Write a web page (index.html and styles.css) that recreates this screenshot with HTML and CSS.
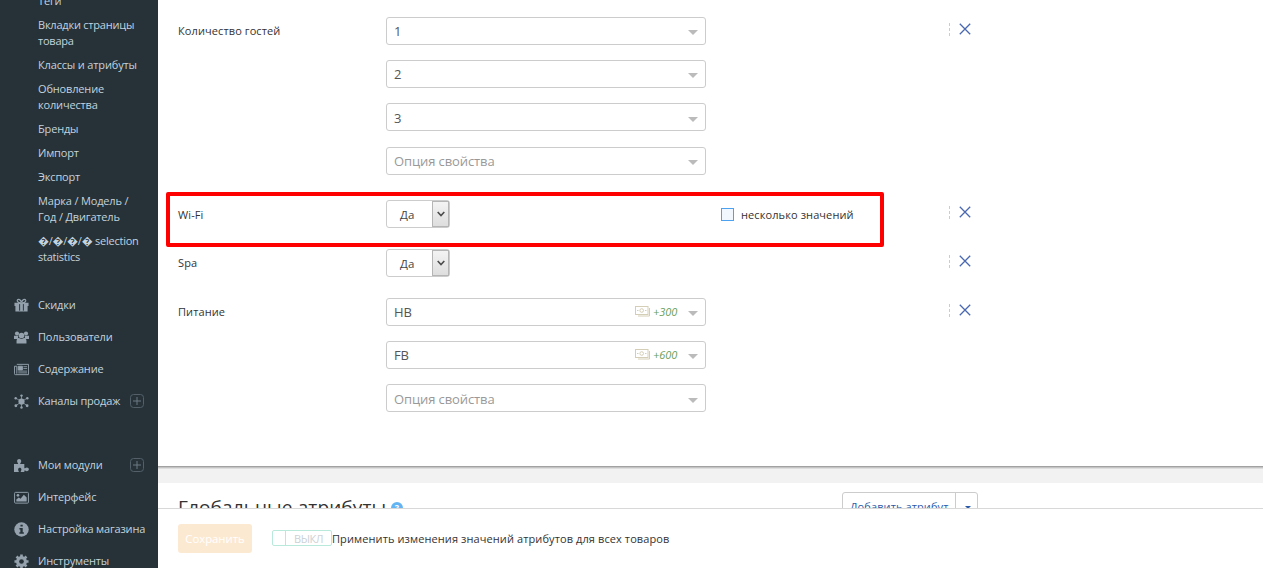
FILE: index.html
```html
<!DOCTYPE html>
<html lang="ru">
<head>
<meta charset="utf-8">
<title>Атрибуты товара</title>
<link rel="stylesheet" href="styles.css">
</head>
<body>
<svg class="defs" width="0" height="0">
  <symbol id="close" viewBox="0 0 12 12"><path d="M.8.8 11.2 11.2M11.2.8.8 11.2" fill="none" stroke="#4a68b0" stroke-width="1.3"/></symbol>
  <symbol id="plus" viewBox="0 0 14 14"><rect x=".5" y=".5" width="13" height="13" rx="3" fill="none" stroke="#53606a"/><path d="M7 3v8M3 7h8" stroke="#6d7983" fill="none"/></symbol>
  <symbol id="money" viewBox="0 0 16 14"><g fill="none" stroke="#d5ceb6"><rect x=".5" y="1.5" width="12.5" height="8"/><path d="M14.5 3v8H3"/><circle cx="6.7" cy="5.5" r="1.800"/><path d="M2 5.5h1.5M10 5.5h1.5"/></g></symbol>
</svg>
<div class="app">
  <nav class="sidebar">
    <div class="submenu">
      <a>Теги</a>
      <a>Вкладки страницы<br>товара</a>
      <a>Классы и атрибуты</a>
      <a>Обновление<br>количества</a>
      <a>Бренды</a>
      <a>Импорт</a>
      <a>Экспорт</a>
      <a>Марка / Модель /<br>Год / Двигатель</a>
      <a>�/�/�/� selection<br>statistics</a>
    </div>
    <div class="menu">
      <a><svg viewBox="0 0 16 16"><path d="M.5 5h15v3.500H14.500V14.500H1.500V8.500H.5z"/><path d="M7.500 5C3 5.500 2.500 1.500 4.800 1.500 6.500 1.500 7.500 3 8 5c.5-2 1.500-3.500 3.200-3.500 2.300 0 1.800 4-2.700 3.500" fill="none" stroke="#95a2ad" stroke-width="1.300"/><path d="M6 6.500v7M10 6.500v7" stroke="#263238" stroke-width="1"/></svg><span>Скидки</span></a>
      <a><svg viewBox="0 0 16 16"><circle cx="3.200" cy="3.700" r="2.200"/><circle cx="12.800" cy="3.700" r="2.200"/><path d="M0 6.200h4.500l-.3 3.500H0zM16 6.200h-4.500l.3 3.500H16z"/><circle cx="8" cy="5.900" r="3"/><path d="M2.700 14.500v-3C2.700 9 4.500 8.500 5.500 8.500Q8 10.500 10.500 8.500c1 0 2.800.5 2.800 3v3z"/></svg><span>Пользователи</span></a>
      <a><svg viewBox="0 0 16 16"><path d="M3 2.500h12.500v11h-14q-1 0-1-1v-8H3v8" fill="none" stroke="#95a2ad"/><path d="M4.500 4.500h4.500v4H4.500zM10 5h4M10 7h4M4.500 9.700H14M4.500 11.600H14" stroke="#95a2ad" stroke-width=".9"/></svg><span>Содержание</span></a>
      <a><svg viewBox="0 0 16 16"><path d="M8 8V1.800M8 8v6.200M8 8l6-3.500M8 8 2 4.500M8 8l6 4.500M8 8l-6 4.500" stroke="#95a2ad" stroke-width=".8"/><circle cx="8" cy="8" r="3.300"/><circle cx="8" cy="1.700" r="1.300"/><circle cx="8" cy="14.300" r="1.300"/><circle cx="1.800" cy="4.500" r="1.300"/><circle cx="14.200" cy="4.500" r="1.300"/><circle cx="2" cy="12.500" r="1.500"/><circle cx="14" cy="12.500" r="1.500"/></svg><span>Каналы продаж</span><svg class="plus"><use href="#plus"/></svg></a>
    </div>
    <div class="menu">
      <a><svg viewBox="0 0 16 16"><path d="M0 6.500h4.200c.8-.7-.9-1.500-.9-3.300 0-3 4.400-3 4.400 0C7.700 5 6 5.800 6.800 6.500H11v4.200c.7.800 1.200-.7 2.600-.7 3 0 3 4 0 4-1.400 0-1.900-1.300-2.600-.5V15H7.300c-.5-1 .6-1.500.6-2.800 0-2.400-3.500-2.400-3.500 0 0 1.300 1.100 1.800.6 2.800H0z"/></svg><span>Мои модули</span><svg class="plus"><use href="#plus"/></svg></a>
      <a><svg viewBox="0 0 16 16"><rect x=".6" y="2.500" width="14.800" height="11.500" rx="1" fill="none" stroke="#95a2ad"/><circle cx="4.200" cy="5.700" r="1.400"/><path d="M2.500 12.300V10L5 8l2 1.200L10.500 5l3 3v4.300z"/></svg><span>Интерфейс</span></a>
      <a><svg viewBox="0 0 16 16"><circle cx="8" cy="8" r="7.700"/><path d="M6.900 2.800h2.400v2.100H6.900zM5.800 6.500h3.500V11h1.200v1.500H5.700V11h1.100V8h-1z" fill="#263238"/></svg><span>Настройка магазина</span></a>
      <a><svg viewBox="0 0 16 16"><circle cx="8" cy="8" r="4.100" fill="none" stroke="#95a2ad" stroke-width="3.400"/><path d="M8 .5v15M.5 8h15M2.700 2.700l10.600 10.600M13.300 2.700 2.700 13.300" stroke="#95a2ad" stroke-width="2.800"/><circle cx="8" cy="8" r="2.500" fill="#263238"/></svg><span>Инструменты</span></a>
    </div>
  </nav>
  <main class="content">
    <section class="card">
      <div class="row row-guests">
        <label>Количество гостей</label>
        <div class="fields">
          <div class="combo"><span>1</span><i></i></div>
          <div class="combo"><span>2</span><i></i></div>
          <div class="combo low"><span>3</span><i></i></div>
          <div class="combo empty"><span>Опция свойства</span><i></i></div>
        </div>
        <div class="remove"><svg><use href="#close"/></svg></div>
      </div>
      <div class="row row-single highlighted">
        <label>Wi-Fi</label>
        <div class="fields inline">
          <div class="pick"><span>Да</span><b><svg viewBox="0 0 8 6"><path d="m.7 1 3.300 3.600L7.300 1"/></svg></b></div>
          <div class="multi"><i></i><span>несколько значений</span></div>
        </div>
        <div class="remove"><svg><use href="#close"/></svg></div>
      </div>
      <div class="row row-single">
        <label>Spa</label>
        <div class="fields inline">
          <div class="pick"><span>Да</span><b><svg viewBox="0 0 8 6"><path d="m.7 1 3.300 3.600L7.300 1"/></svg></b></div>
        </div>
        <div class="remove"><svg><use href="#close"/></svg></div>
      </div>
      <div class="row row-meals">
        <label>Питание</label>
        <div class="fields">
          <div class="combo"><span>HB</span><svg><use href="#money"/></svg><em>+300</em><i></i></div>
          <div class="combo"><span>FB</span><svg><use href="#money"/></svg><em>+600</em><i></i></div>
          <div class="combo empty low"><span>Опция свойства</span><i></i></div>
        </div>
        <div class="remove"><svg><use href="#close"/></svg></div>
      </div>
    </section>
    <section class="globals">
      <h2>Глобальные атрибуты</h2><span class="help">?</span>
      <div class="split"><span>Добавить атрибут</span><b><i></i></b></div>
    </section>
    <footer class="actions">
      <button class="save">Сохранить</button>
      <div class="toggle"><i></i><span>ВЫКЛ</span></div>
      <span class="note">Применить изменения значений атрибутов для всех товаров</span>
    </footer>
  </main>
</div>
</body>
</html>
```

FILE: styles.css
```css
*, *::after { box-sizing: border-box; }
body { margin: 0; font: 11px/16px "Open Sans", sans-serif; color: #333; background: #f2f2f2; }
.defs { display: none; }
.app { display: flex; width: 1263px; height: 568px; overflow: hidden; }

.sidebar { width: 158px; flex: none; background: #263238; color: #c3d3df; overflow: hidden; letter-spacing: -.16px; }
.submenu { margin-top: -11px; margin-bottom: 20px; padding-left: 38px; }
.submenu a { display: block; padding: 4px 0; white-space: nowrap; }
.submenu a:nth-child(2) { letter-spacing: -.22px; }
.submenu a:last-child { letter-spacing: -.24px; }
.menu { margin-bottom: 32px; }
.menu a { display: flex; align-items: center; height: 32px; padding: 0 14px; gap: 9px; white-space: nowrap; }
.menu svg { width: 15px; height: 15px; flex: none; fill: #95a2ad; }
.menu .plus { width: 14px; height: 14px; margin-left: auto; }

.content { flex: 1; display: flex; flex-direction: column; min-width: 0; letter-spacing: .1px; }
.card { height: 469px; flex: none; padding-top: 17px; background: #fff; border-bottom: 1px solid #dedede; box-shadow: inset 0 -1px 0 #c4c4c4, inset 0 -2px 0 #a2a2a2; }
.row { display: grid; grid-template-columns: 208px 320.400px 1fr; padding-left: 20px; align-items: start; position: relative; }
.row-guests { height: 183px; }
.row-single { height: 49px; }
.row label { padding-top: 6px; }
.row-single.highlighted label { padding-top: 7px; }
.fields { display: flex; flex-direction: column; gap: 15px; }
.row-guests .empty { margin-top: 1px; }
.fields.inline { flex-direction: row; gap: 271px; }
.combo { height: 28px; display: flex; align-items: center; padding: 0 7px; border: 1px solid #ccc; border-radius: 3px; background: #fff; font-size: 13px; letter-spacing: -.1px; color: #555; }
.combo.low { padding-top: 2px; }
.combo span { flex: 1; }
.combo.empty { color: #999; }
.combo svg { width: 16px; height: 14px; margin-right: 2px; }
.combo em { font-size: 11px; letter-spacing: 0; color: #6a9e57; margin-right: 11px; }
.combo i { border: 5px solid transparent; border-top-color: #bbb; border-bottom: 0; margin-top: 3px; }
.pick { width: 64px; height: 28px; flex: none; display: flex; border: 1px solid #ccc; border-radius: 3px; line-height: 27px; }
.pick span { flex: 1; padding-left: 13px; font-size: 11.500px; color: #444; }
.pick b { width: 17px; border: 1px solid #b5b5b5; background: linear-gradient(#f3f3f3, #dedede); display: grid; place-items: center; }
.pick svg { width: 8px; height: 6px; fill: none; stroke: #4c4c4c; stroke-width: 1.600; }
.multi { display: flex; flex: none; align-items: center; height: 28px; gap: 7px; padding-top: 1px; white-space: nowrap; }
.multi i { width: 13px; height: 13px; border: 1px solid #4da2f0; background: #f2f7fd; }
.remove { margin: 6px 0 0 242.600px; width: 22px; height: 13px; border-left: 1px dashed #ccc; display: flex; justify-content: flex-end; }
.remove svg { width: 12px; height: 12px; }
.highlighted::after { content: ""; position: absolute; left: 8px; top: -8px; width: 718px; height: 55px; border: 4px solid #f00; border-radius: 2px; }

.globals { height: 25px; flex: none; margin-top: 14px; padding: 9px 0 0 20px; background: #fff; display: flex; align-items: flex-start; overflow: hidden; }
.globals h2 { width: 208px; margin: 0; font-size: 19px; letter-spacing: .12px; font-weight: 400; line-height: 30px; white-space: nowrap; }
.help { width: 12px; height: 12px; flex: none; margin: 10px 0 0 5px; border-radius: 50%; background: #63b4f2; color: #fff; font-weight: 700; font-size: 9px; line-height: 12px; text-align: center; }
.split { margin-left: 439px; width: 136px; height: 29px; flex: none; display: flex; border: 1px solid #ccc; border-radius: 3px; color: #2b5aa8; line-height: 27px; }
.split span { width: 112px; padding-left: 7px; letter-spacing: .1px; white-space: nowrap; }
.split b { flex: 1; border-left: 1px solid #ccc; }
.split i { display: block; border: 3px solid transparent; border-top-color: #2b5aa8; width: 6px; margin: 13px 0 0 9px; }

.actions { flex: 1; display: flex; background: #fff; border-top: 1px solid #d8d8d8; padding: 15px 0 0 20px; }
.save { width: 74px; height: 29px; border: 0; border-radius: 3px; background: #fce9d2; color: #fff; font: 11.300px "Open Sans", sans-serif; padding: 0; }
.toggle { width: 60px; height: 16px; margin: 6px 0 0 20px; border: 1px solid #b9e9db; border-radius: 2px; display: flex; color: #ccd2d6; line-height: 15px; letter-spacing: -.5px; }
.toggle i { width: 13px; border-right: 1px solid #b9e9db; }
.toggle span { flex: 1; text-align: center; }
.note { padding-top: 7px; white-space: nowrap; }
```
